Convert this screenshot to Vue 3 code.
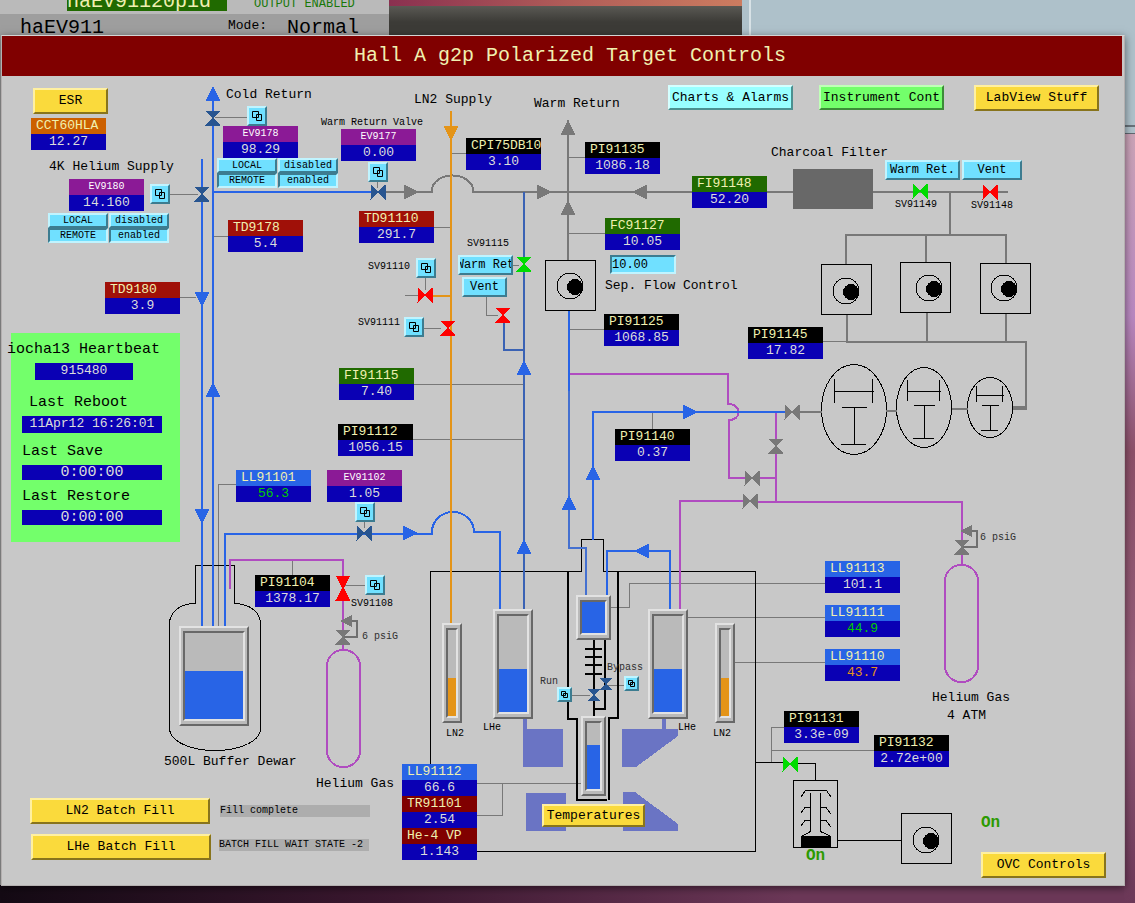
<template>
  <div class="desktop">
    <div class="back-window pid-window">
      <div class="pid-row">
        <strong class="pid-name">haEV91120pid</strong>
        <span class="pid-status">OUTPUT ENABLED</span>
      </div>
      <div class="pid-row pid-row--dark">
        <span class="pid-big">haEV911</span>
        <span class="pid-mode">Mode:</span>
        <span class="pid-big">Normal</span>
      </div>
    </div>
    <div class="back-window taskbar"></div>
    <div class="back-window side-window"></div>

    <main class="window">
      <header class="title-bar">
        <h1>Hall A g2p Polarized Target Controls</h1>
      </header>

      <div class="canvas">
        <svg class="pipes" viewBox="2 76 1120 806" width="1120" height="806" aria-hidden="true">
          <!-- magnet coils -->
          <g fill="#6a74c4">
            <path d="M523 719h4v10h36v38h-40z" />
            <path d="M662 719h4v10h12v7l-42 31h-14v-38h40z" />
            <path d="M526 793h40v38h-40z" />
            <path d="M623 792h12l43 32v7h-55z" />
          </g>

          <rect x="793" y="169" width="80" height="40" fill="#686868" />

          <g fill="none" stroke-width="1" :stroke="GRAY">
            <path v-for="d in leads" :key="d" :d="d" />
          </g>

          <g fill="none" stroke-width="1" stroke="#000">
            <path v-for="d in outlines" :key="d" :d="d" />
            <ellipse cx="854" cy="409.5" rx="32.5" ry="45" />
            <ellipse cx="924" cy="407.5" rx="27.5" ry="40" />
            <ellipse cx="990" cy="407.5" rx="22.5" ry="30" />
          </g>
          <rect x="801" y="836" width="30" height="12" />

          <g fill="none" stroke-width="2" stroke="#000">
            <path d="M568 571V719H577V800H607" />
            <path d="M618 571V718H609V800" />
            <path d="M594 638V718M605 638V709H594" />
            <path d="M585 649h17M585 657h17M585 665h17M585 674h17" />
          </g>

          <path
            v-for="pipe in pipes"
            :key="pipe.d"
            :d="pipe.d"
            fill="none"
            :stroke="pipe.color"
            :stroke-width="pipe.width || 2"
          />
          <rect x="327" y="650" width="33" height="117" rx="16" fill="none" :stroke="PURPLE" stroke-width="2" />
          <rect x="945" y="565" width="33" height="117" rx="16" fill="none" :stroke="PURPLE" stroke-width="2" />

          <path v-for="(arrow, i) in arrows" :key="`a${i}`" :d="arrowPath(arrow)" :fill="arrow.color" />
          <path v-for="(valve, i) in valves" :key="`v${i}`" :d="valvePath(valve)" :fill="valve.color" />

          <g v-for="pump in pumps" :key="`p${pump.x}`">
            <rect :x="pump.x + 0.5" :y="pump.y + 0.5" width="50" height="50" fill="none" stroke="#000" />
            <circle :cx="pump.cx" :cy="pump.cy" r="13" fill="none" stroke="#000" />
            <circle :cx="pump.cx + 5" :cy="pump.cy + 1" r="8" />
          </g>
        </svg>

        <div
          v-for="gauge in gauges"
          :key="`${gauge.x}-${gauge.y}`"
          class="gauge"
          :style="box(gauge)"
        >
          <div class="gauge-well">
            <div class="gauge-fill" :style="{ height: `${gauge.level}%`, background: gauge.color }"></div>
          </div>
        </div>

        <div v-for="item in readouts" :key="item.name" class="readout" :style="at(item)">
          <div class="readout-name" :class="item.kind">{{ item.name }}</div>
          <div class="readout-value" :class="item.state">{{ item.value }}</div>
        </div>

        <span
          v-for="label in labels"
          :key="`${label.text}-${label.x}`"
          class="label"
          :class="label.kind"
          :style="at(label)"
        >{{ label.text }}</span>

        <button
          v-for="button in buttons"
          :key="`${button.text}-${button.x}-${button.y}`"
          type="button"
          class="button"
          :class="button.kind"
          :style="box(button)"
        >{{ button.text }}</button>

        <button
          v-for="link in links"
          :key="link.name"
          type="button"
          class="button"
          :aria-label="link.name"
          :style="box({ ...link, w: link.size || 20, h: link.size || 20 })"
        >
          <svg v-if="link.size" viewBox="0 0 7 7" width="7" height="7" aria-hidden="true">
            <path d="M.5.5h4v4h-4zM2.5 2.5h4v4h-4z" fill="none" stroke="#000" />
          </svg>
          <svg v-else viewBox="0 0 12 12" width="12" height="12" aria-hidden="true">
            <path d="M1.5 1.5h6v6h-6zM5.5 4.5h5v6h-5z" fill="none" stroke="#000" />
          </svg>
        </button>

        <input id="flow" v-model="flow" class="flow-input" type="text" :style="box({ x: 610, y: 255, w: 66, h: 19 })">
        <label for="flow" class="label" :style="at({ x: 605, y: 278 })">Sep. Flow Control</label>

        <section class="heartbeat" :style="box({ x: 11, y: 333, w: 169, h: 209 })">
          <h2 class="heartbeat-title">iocha13 Heartbeat</h2>
          <output class="heartbeat-value short">915480</output>
          <h2 class="indent">Last Reboot</h2>
          <output class="heartbeat-value">11Apr12 16:26:01</output>
          <h2>Last Save</h2>
          <output class="heartbeat-value wide">0:00:00</output>
          <h2>Last Restore</h2>
          <output class="heartbeat-value wide">0:00:00</output>
        </section>

        <output class="status" :style="at({ x: 220, y: 805 })">Fill complete</output>
        <output class="status" :style="at({ x: 219, y: 839 })">BATCH FILL WAIT STATE -2</output>
      </div>
    </main>
  </div>
</template>

<script setup>
import { ref } from 'vue'

const BLUE = '#2864e6'
const STEEL = '#3a62b4'
const VALVE = '#285590'
const GRAY = '#787878'
const PURPLE = '#b04cc0'
const ORANGE = '#e49418'
const RED = '#ff0000'
const GREEN = '#00dc00'

// screen coordinates of the canvas corner
const ORIGIN = { x: 2, y: 76 }

const flow = ref('10.00')

const at = ({ x, y }) => ({ left: `${x - ORIGIN.x}px`, top: `${y - ORIGIN.y}px` })
const box = item => ({ ...at(item), width: `${item.w}px`, height: `${item.h}px` })

const readouts = [
  { name: 'CCT60HLA', value: '12.27', x: 31, y: 118, kind: 'amber' },
  { name: 'EV9178', value: '98.29', x: 223, y: 126, kind: 'purple' },
  { name: 'EV9180', value: '14.160', x: 69, y: 179, kind: 'purple' },
  { name: 'EV9177', value: '0.00', x: 341, y: 129, kind: 'purple' },
  { name: 'EV91102', value: '1.05', x: 327, y: 470, kind: 'purple' },
  { name: 'CPI75DB10', value: '3.10', x: 466, y: 138, kind: 'black' },
  { name: 'PI91135', value: '1086.18', x: 585, y: 142, kind: 'black' },
  { name: 'FI91148', value: '52.20', x: 692, y: 176, kind: 'green' },
  { name: 'FC91127', value: '10.05', x: 605, y: 218, kind: 'green' },
  { name: 'TD9178', value: '5.4', x: 228, y: 220, kind: 'red' },
  { name: 'TD91110', value: '291.7', x: 359, y: 211, kind: 'red' },
  { name: 'TD9180', value: '3.9', x: 105, y: 282, kind: 'red' },
  { name: 'PI91125', value: '1068.85', x: 604, y: 314, kind: 'black' },
  { name: 'PI91145', value: '17.82', x: 748, y: 327, kind: 'black' },
  { name: 'PI91140', value: '0.37', x: 615, y: 429, kind: 'black' },
  { name: 'FI91115', value: '7.40', x: 339, y: 368, kind: 'green' },
  { name: 'PI91112', value: '1056.15', x: 338, y: 424, kind: 'black' },
  { name: 'LL91101', value: '56.3', x: 236, y: 470, kind: 'blue', state: 'ok' },
  { name: 'PI91104', value: '1378.17', x: 255, y: 575, kind: 'black' },
  { name: 'LL91113', value: '101.1', x: 825, y: 561, kind: 'blue' },
  { name: 'LL91111', value: '44.9', x: 825, y: 605, kind: 'blue', state: 'ok' },
  { name: 'LL91110', value: '43.7', x: 825, y: 649, kind: 'blue', state: 'warn' },
  { name: 'PI91131', value: '3.3e-09', x: 784, y: 711, kind: 'black' },
  { name: 'PI91132', value: '2.72e+00', x: 874, y: 735, kind: 'black' },
  { name: 'LL91112', value: '66.6', x: 402, y: 764, kind: 'blue' },
  { name: 'TR91101', value: '2.54', x: 402, y: 796, kind: 'maroon' },
  { name: 'He-4 VP', value: '1.143', x: 402, y: 828, kind: 'maroon' }
]

const labels = [
  { text: 'Cold Return', x: 226, y: 87 },
  { text: 'LN2 Supply', x: 414, y: 92 },
  { text: 'Warm Return', x: 534, y: 96 },
  { text: '4K Helium Supply', x: 49, y: 159 },
  { text: 'Charcoal Filter', x: 771, y: 145 },
  { text: '500L Buffer Dewar', x: 164, y: 754 },
  { text: 'Helium Gas', x: 316, y: 776 },
  { text: 'Helium Gas', x: 932, y: 690 },
  { text: '4 ATM', x: 947, y: 708 },
  { text: 'Warm Return Valve', x: 321, y: 115, kind: 'small' },
  { text: 'SV91115', x: 467, y: 236, kind: 'small' },
  { text: 'SV91110', x: 368, y: 259, kind: 'small' },
  { text: 'SV91111', x: 358, y: 315, kind: 'small' },
  { text: 'SV91149', x: 895, y: 197, kind: 'small' },
  { text: 'SV91148', x: 971, y: 198, kind: 'small' },
  { text: 'SV91108', x: 351, y: 596, kind: 'small' },
  { text: '6 psiG', x: 362, y: 629, kind: 'small dim' },
  { text: '6 psiG', x: 980, y: 530, kind: 'small dim' },
  { text: 'LN2', x: 446, y: 726, kind: 'small' },
  { text: 'LHe', x: 483, y: 720, kind: 'small' },
  { text: 'LHe', x: 678, y: 720, kind: 'small' },
  { text: 'LN2', x: 713, y: 726, kind: 'small' },
  { text: 'Run', x: 540, y: 674, kind: 'small dim' },
  { text: 'Bypass', x: 607, y: 660, kind: 'small dim' },
  { text: 'On', x: 806, y: 848, kind: 'on' },
  { text: 'On', x: 981, y: 815, kind: 'on' }
]

const buttons = [
  { text: 'ESR', x: 33, y: 88, w: 75, h: 26, kind: 'yellow' },
  { text: 'Charts & Alarms', x: 668, y: 85, w: 125, h: 25, kind: 'cyan' },
  { text: 'Instrument Cont', x: 819, y: 85, w: 125, h: 25, kind: 'lime' },
  { text: 'LabView Stuff', x: 974, y: 85, w: 125, h: 26, kind: 'yellow' },
  { text: 'OVC Controls', x: 981, y: 852, w: 125, h: 26, kind: 'yellow' },
  { text: 'LN2 Batch Fill', x: 30, y: 798, w: 180, h: 26, kind: 'yellow' },
  { text: 'LHe Batch Fill', x: 31, y: 834, w: 180, h: 26, kind: 'yellow' },
  { text: 'Temperatures', x: 542, y: 804, w: 103, h: 23, kind: 'yellow' },
  { text: 'Warm Ret.', x: 885, y: 160, w: 75, h: 20, kind: 'medium' },
  { text: 'Vent', x: 962, y: 160, w: 60, h: 20, kind: 'medium' },
  { text: 'Warm Ret', x: 458, y: 255, w: 55, h: 20, kind: 'medium' },
  { text: 'Vent', x: 462, y: 277, w: 45, h: 20, kind: 'medium' },
  { text: 'LOCAL', x: 217, y: 158, w: 60, h: 15, kind: 'tiny' },
  { text: 'disabled', x: 278, y: 158, w: 60, h: 15, kind: 'tiny' },
  { text: 'REMOTE', x: 217, y: 173, w: 60, h: 15, kind: 'tiny pressed' },
  { text: 'enabled', x: 278, y: 173, w: 60, h: 15, kind: 'tiny pressed' },
  { text: 'LOCAL', x: 48, y: 213, w: 60, h: 15, kind: 'tiny' },
  { text: 'disabled', x: 109, y: 213, w: 60, h: 15, kind: 'tiny' },
  { text: 'REMOTE', x: 48, y: 228, w: 60, h: 15, kind: 'tiny pressed' },
  { text: 'enabled', x: 109, y: 228, w: 60, h: 15, kind: 'tiny pressed' }
]

const links = [
  { name: 'EV9178 panel', x: 247, y: 106 },
  { name: 'EV9180 panel', x: 150, y: 184 },
  { name: 'EV9177 panel', x: 368, y: 162 },
  { name: 'SV91110 panel', x: 416, y: 258 },
  { name: 'SV91111 panel', x: 404, y: 317 },
  { name: 'EV91102 panel', x: 355, y: 502 },
  { name: 'SV91108 panel', x: 365, y: 575 },
  { name: 'Run valve panel', x: 557, y: 687, size: 15 },
  { name: 'Bypass valve panel', x: 624, y: 676, size: 15 }
]

const gauges = [
  { x: 179, y: 626, w: 70, h: 100, level: 56, color: BLUE },
  { x: 442, y: 623, w: 20, h: 100, level: 44, color: ORANGE },
  { x: 493, y: 609, w: 40, h: 110, level: 45, color: BLUE },
  { x: 648, y: 609, w: 40, h: 110, level: 45, color: BLUE },
  { x: 715, y: 623, w: 20, h: 100, level: 44, color: ORANGE },
  { x: 576, y: 595, w: 35, h: 45, level: 100, color: BLUE },
  { x: 581, y: 716, w: 25, h: 80, level: 66, color: BLUE }
]

const pumps = [
  { x: 545, y: 260, cx: 570, cy: 286 },
  { x: 821, y: 264, cx: 846, cy: 291 },
  { x: 900, y: 262, cx: 929, cy: 288 },
  { x: 980, y: 263, cx: 1004, cy: 288 },
  { x: 901, y: 813, cx: 926, cy: 840 }
]

const pipes = [
  { color: GRAY, d: 'M385 192H432V188A21 16 0 0 1 473 188V192H692' },
  { color: GRAY, d: 'M568 120V260' },
  { color: GRAY, d: 'M767 192H793M873 192H1008M950 192V236' },
  { color: GRAY, d: 'M846 264V235H1006V263M926 235V262' },
  { color: GRAY, d: 'M847 315V342H1026V409M927 313V342M1006 314V342' },
  { color: GRAY, d: 'M1013 408H1027', width: 4 },
  { color: GRAY, d: 'M800 412H822M886 411H897M952 409H968' },
  { color: BLUE, d: 'M202 159V626' },
  { color: BLUE, d: 'M213 98V626M213 192H371' },
  { color: BLUE, d: 'M225 626V534H432V532A21 20 0 0 1 474 532H500V609' },
  { color: STEEL, d: 'M524 192V609M504 322V350H524' },
  { color: PURPLE, d: 'M570 374H728V404C742 404 742 420 729 420V478H776' },
  { color: PURPLE, d: 'M776 413V502M680 609V501H745M756 502H962V565' },
  { color: PURPLE, d: 'M230 589V560H343V650' },
  { color: BLUE, d: 'M569 311V391' },
  { color: '#4470d0', d: 'M569 391V548H586V595' },
  { color: BLUE, d: 'M593 540V412H785' },
  { color: BLUE, d: 'M607 595V551H670V609' },
  { color: ORANGE, d: 'M451 111V623M432 296H451' },
  { color: '#707070', d: 'M972 531H977V547H963' },
  { color: '#707070', d: 'M352 621H357V637H343' }
]

const leads = [
  'M215 117.5H247M170 194.5H198M214 236.5H228M180 297.5H196',
  'M413 384.5H524M413 439.5H524M451 153.5H466M569 157.5H585',
  'M434 227.5H451M569 233.5H605M569 329.5H604M405 295.5H418',
  'M425.5 278V290M424 328.5H441M513 265.5H519M486.5 297V315.5H498',
  'M377.5 181V188M364.5 522V528M236 484.5H218.5V626M652.5 413V429',
  'M823 341.5H847M292.5 561V575M345 585.5H365',
  'M611 607.5H629.5V583.5H825M687 617.5H825M735 662.5H825',
  'M477 783.5H583M477 815.5H502.5V783M784 727.5H771.5V762M771 750.5H874',
  'M572 695.5H590M608 685.5H624'
]

const outlines = [
  // cryostat
  'M430.5 764V571.5H581.5V539.5H603.5V571.5H755.5V851.5H477',
  'M755 762.5H785M797 763.5H815.5V780',
  // dewar
  'M195.5 603V565.5H234.5V603.5C250 604 260.5 612 260.5 624V730C258 744 235 750.5 215 750.5S172 744 169.5 730V624C169.5 612 180 603.5 195.5 603.5',
  // turbo pump
  'M793.5 780.5H837.5V847.5H793.5ZM838 840.5H901',
  'M801 797L805.5 790.5H826.5L831 797M810.5 793V831.5L802 836M820.5 793V831.5L830 836',
  'M810 807.5H805L801 813M821 807.5H826L831 814M810 820.5H805L801 826M821 820.5H826L831 827',
  // roots blowers
  'M834.5 379V403M872.5 379V403M834 391.5H874M842 407.5H867M854.5 407V444M841 444.5H866',
  'M907.5 380V401M939.5 380V401M907 391.5H941M914 405.5H935M924.5 405V438M913 438.5H934',
  'M976.5 386V402M1002.5 386V402M976 395.5H1004M982 405.5H999M990.5 405V430M981 430.5H998'
]

const arrows = [
  { dir: 'up', x: 213, y: 86, color: BLUE },
  { dir: 'up', x: 568, y: 120, color: GRAY },
  { dir: 'up', x: 568, y: 200, color: GRAY },
  { dir: 'up', x: 213, y: 382, color: BLUE },
  { dir: 'up', x: 524, y: 360, color: BLUE },
  { dir: 'up', x: 524, y: 539, color: BLUE },
  { dir: 'up', x: 569, y: 495, color: BLUE },
  { dir: 'up', x: 593, y: 465, color: BLUE },
  { dir: 'down', x: 451, y: 141, color: ORANGE },
  { dir: 'down', x: 202, y: 307, color: BLUE },
  { dir: 'down', x: 202, y: 524, color: BLUE },
  { dir: 'right', x: 419, y: 192, color: GRAY },
  { dir: 'right', x: 552, y: 192, color: GRAY },
  { dir: 'right', x: 418, y: 533, color: BLUE },
  { dir: 'right', x: 698, y: 412, color: BLUE },
  { dir: 'left', x: 632, y: 192, color: GRAY },
  { dir: 'left', x: 634, y: 551, color: BLUE },
  { dir: 'left', x: 960, y: 531, color: GRAY, size: 12 },
  { dir: 'left', x: 340, y: 621, color: GRAY, size: 12 }
]

const valves = [
  { dir: 'v', x: 213, y: 118, color: VALVE },
  { dir: 'v', x: 202, y: 194, color: VALVE },
  { dir: 'h', x: 378, y: 192, color: VALVE },
  { dir: 'h', x: 364, y: 533, color: VALVE },
  { dir: 'v', x: 594, y: 695, color: VALVE, size: 12 },
  { dir: 'v', x: 606, y: 684, color: VALVE, size: 12 },
  { dir: 'h', x: 425, y: 295, color: RED },
  { dir: 'v', x: 448, y: 328, color: RED },
  { dir: 'v', x: 503, y: 315, color: RED },
  { dir: 'v', x: 343, y: 588, color: RED, length: 25 },
  { dir: 'v', x: 524, y: 264, color: GREEN },
  { dir: 'h', x: 920, y: 191, color: GREEN },
  { dir: 'h', x: 990, y: 192, color: RED },
  { dir: 'h', x: 790, y: 764, color: GREEN },
  { dir: 'h', x: 792, y: 412, color: GRAY },
  { dir: 'v', x: 776, y: 446, color: GRAY },
  { dir: 'h', x: 752, y: 478, color: GRAY },
  { dir: 'h', x: 750, y: 501, color: GRAY },
  { dir: 'v', x: 962, y: 547, color: GRAY },
  { dir: 'v', x: 343, y: 637, color: GRAY }
]

// x, y is the tip of the arrow
const arrowPath = ({ dir, x, y, size = 15 }) => {
  const half = size / 2
  if (dir === 'up') return `M${x} ${y}l${half} ${size}h${-size}z`
  if (dir === 'down') return `M${x} ${y}l${half} ${-size}h${-size}z`
  if (dir === 'right') return `M${x} ${y}l${-size} ${half}v${-size}z`
  return `M${x} ${y}l${size} ${half}v${-size}z`
}

// x, y is the middle of the valve
const valvePath = ({ dir, x, y, size = 15, length = size }) => {
  const half = size / 2
  const reach = length / 2
  if (dir === 'v') {
    return `M${x - half} ${y - reach}h${size}L${x + 1} ${y}L${x + half} ${y + reach}h${-size}L${x - 1} ${y}z`
  }
  return `M${x - reach} ${y - half}v${size}L${x} ${y + 1}L${x + reach} ${y + half}v${-size}L${x} ${y - 1}z`
}
</script>

<style>
body {
  margin: 0;
}
</style>

<style scoped>
.desktop {
  position: relative;
  display: flex;
  flex-direction: column;
  box-sizing: border-box;
  min-height: 100vh;
  padding: 35px 10px 17px 1px;
  overflow: hidden;
  background:
    linear-gradient(#d8b8b0, #b888c0 35%, #8c5068 50%, #945c78 75%, #6c3858) right top / 11px 100% no-repeat,
    linear-gradient(90deg, #140a14, #3c1830 35%, #6c3858 70%, #6c3858);
  font-family: "Liberation Mono", monospace;
  font-size: 13px;
  line-height: 16px;
  color: #000;
}

/* windows behind the control screen */
.back-window {
  position: absolute;
  top: 0;
  overflow: hidden;
}

.pid-window {
  left: 0;
  width: 389px;
  height: 100%;
  max-height: 885px;
  background: #9e9e9e;
}

.pid-row {
  display: flex;
  align-items: flex-end;
  height: 14px;
  padding-left: 67px;
  background: #bababa;
}

.pid-name {
  box-sizing: border-box;
  width: 160px;
  height: 11px;
  margin-right: 27px;
  margin-bottom: 3px;
  background: #206a00;
  color: #f0f0b0;
  font-size: 20px;
  font-weight: normal;
  line-height: 4px;
}

.pid-status {
  height: 14px;
  color: #187808;
  font-size: 12px;
  line-height: 8px;
}

.pid-row--dark {
  align-items: center;
  height: 28px;
  padding-left: 20px;
  background: #9e9e9e;
}

.pid-big {
  font-size: 20px;
}

.pid-mode {
  height: 20px;
  margin: 0 20px 0 124px;
}

.taskbar {
  left: 389px;
  right: 393px;
  height: 35px;
  background:
    linear-gradient(90deg, #8a3050, #b05c58 50%, #cc7c60) top / 100% 6px no-repeat,
    linear-gradient(#5a5954 6px, #3c3b37 22px);
}

.side-window {
  right: 0;
  width: 393px;
  height: 134px;
  box-sizing: border-box;
  border-left: 7px solid #aec1ca;
  border-bottom: 1px solid #606870;
  background: linear-gradient(#aec1ca 125px, #68727a 125px, #68727a 127px, #aec1ca 127px);
  box-shadow: inset 2px 0 #d8e2e6;
}

.window {
  position: relative;
  display: flex;
  flex: 1;
  flex-direction: column;
  border: 1px solid #b4b0b0;
  border-top-color: #d4d4d4;
  background: #c8c8c8;
  box-shadow: 0 2px 8px rgba(0, 0, 0, 0.5);
}

.title-bar {
  display: flex;
  align-items: center;
  justify-content: center;
  height: 40px;
  margin-right: 2px;
  padding-left: 16px;
  background: #800000;
}

.title-bar h1 {
  margin: 0;
  color: #f0f0b0;
  font-size: 20px;
  font-weight: normal;
  line-height: 24px;
}

.canvas {
  position: relative;
  flex: 1;
}

.pipes {
  display: block;
  shape-rendering: crispEdges;
}

.gauge {
  position: absolute;
  box-sizing: border-box;
  padding: 3px 2px;
  border: 2px solid;
  border-color: #e2e2e2 #686868 #686868 #e2e2e2;
  background: #bababa;
}

.gauge-well {
  display: flex;
  flex-direction: column;
  justify-content: flex-end;
  box-sizing: border-box;
  height: 100%;
  border: 2px solid;
  border-color: #686868 #e2e2e2 #e2e2e2 #686868;
}

.readout {
  position: absolute;
  width: 75px;
}

.readout-name {
  height: 16px;
  padding-left: 5px;
  color: #f0f0b0;
  white-space: nowrap;
}

.readout-name.black {
  background: #000;
}

.readout-name.green {
  background: #206a00;
}

.readout-name.red {
  background: #a01008;
}

.readout-name.maroon {
  background: #800000;
}

.readout-name.blue {
  background: #2864e6;
}

.readout-name.amber {
  background: #cc6000;
}

.readout-name.purple {
  padding-left: 0;
  background: #8b1a96;
  color: #fff;
  font-size: 10px;
  text-align: center;
}

.readout-value {
  height: 16px;
  background: #0a00b4;
  color: #dcdcdc;
  text-align: center;
}

.readout-value.ok {
  color: #00cd00;
}

.readout-value.warn {
  color: #e49418;
}

.label {
  position: absolute;
  white-space: nowrap;
}

.label.small {
  font-size: 10px;
}

.label.dim {
  color: #303030;
}

.label.on {
  color: #2c9a00;
  font-size: 16px;
  font-weight: bold;
}

.button {
  position: absolute;
  display: flex;
  align-items: center;
  justify-content: center;
  box-sizing: border-box;
  padding: 0;
  overflow: hidden;
  border: 2px solid;
  border-color: #c0f4ff #3c7c90 #3c7c90 #c0f4ff;
  border-radius: 0;
  background: #70e0ff;
  color: #000;
  font: inherit;
  line-height: 16px;
  white-space: nowrap;
  cursor: pointer;
}

.button.yellow {
  border-color: #fff0a0 #88741c #88741c #fff0a0;
  background: #fada3c;
}

.button.cyan {
  border-color: #d4ffff #4c9090 #4c9090 #d4ffff;
  background: #98ffff;
}

.button.lime {
  border-color: #c0ffb8 #3c8c38 #3c8c38 #c0ffb8;
  background: #73ff6b;
}

.button.medium {
  font-size: 12px;
}

.button.tiny {
  font-size: 10px;
  line-height: 11px;
}

.button.pressed {
  border-color: #3c7c90 #c0f4ff #c0f4ff #3c7c90;
}

.flow-input {
  position: absolute;
  box-sizing: border-box;
  padding: 0;
  border: 2px solid;
  border-color: #3c7c90 #c0f4ff #c0f4ff #3c7c90;
  background: #70e0ff;
  color: #000;
  font: inherit;
  font-size: 12px;
}

.heartbeat {
  position: absolute;
  box-sizing: border-box;
  padding-top: 8px;
  padding-left: 11px;
  background: #73ff6b;
}

.heartbeat h2 {
  margin: 0 0 4px;
  font-size: 15px;
  font-weight: normal;
  line-height: 18px;
  white-space: nowrap;
}

.heartbeat .heartbeat-title {
  margin-left: -15px;
}

.heartbeat .indent {
  margin-left: 7px;
}

.heartbeat-value {
  display: block;
  width: 140px;
  height: 17px;
  margin-bottom: 10px;
  background: #0a00b4;
  color: #dcdcdc;
  text-align: center;
}

.heartbeat-value.short {
  width: 98px;
  margin: 0 0 14px 13px;
}

.heartbeat-value.wide {
  height: 15px;
  margin-bottom: 8px;
  font-size: 15px;
  line-height: 15px;
}

.status {
  position: absolute;
  width: 150px;
  height: 12px;
  background: #adadad;
  font-size: 10px;
  line-height: 11px;
  white-space: nowrap;
}
</style>
